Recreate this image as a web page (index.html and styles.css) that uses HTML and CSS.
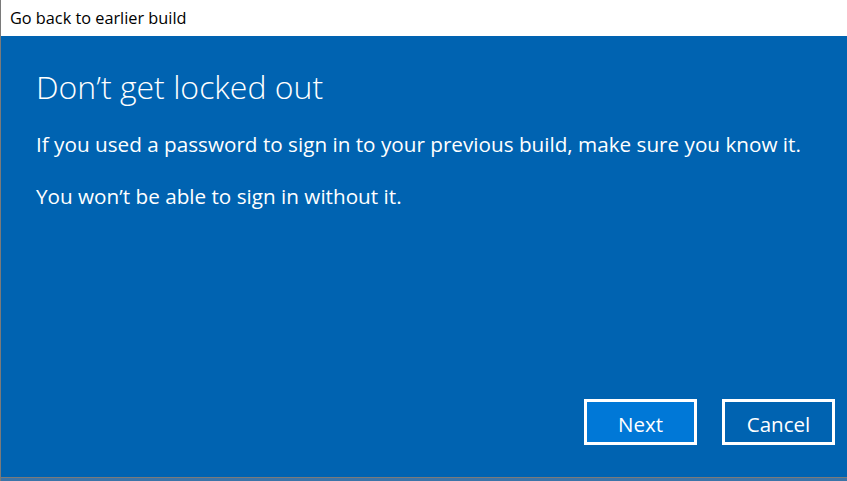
FILE: index.html
```html
<!DOCTYPE html>
<html lang="en">
<head>
    <meta charset="UTF-8">
    <meta name="viewport" content="width=device-width, initial-scale=1.0">
    <title>Go back to earlier build</title>
    <link rel="stylesheet" href="styles.css">
</head>
<body>
    <div class="window">
        <div class="titlebar">Go back to earlier build</div>
        <div class="content">
            <h1>Don’t get locked out</h1>
            <p>If you used a password to sign in to your previous build, make sure you know it.</p>
            <p>You won’t be able to sign in without it.</p>
            <div class="buttons">
                <button class="btn primary">Next</button>
                <button class="btn">Cancel</button>
            </div>
        </div>
        <div class="bottom-edge"></div>
    </div>
</body>
</html>
```

FILE: styles.css
```css
html, body {
    margin: 0;
    padding: 0;
}
body {
    font-family: "Open Sans", "Noto Sans", sans-serif;
    background-color: #0063b1;
    width: 847px;
    height: 481px;
    overflow: hidden;
}
.window {
    height: 481px;
    display: flex;
    flex-direction: column;
    border-left: 1px solid #7a7a7a;
    box-sizing: border-box;
}
.titlebar {
    height: 36px;
    background-color: #fff;
    color: #000;
    font-size: 16.3px;
    line-height: 36px;
    padding-left: 9px;
}
.content {
    flex: 1;
    display: flex;
    flex-direction: column;
    padding: 0 0 0 35px;
    color: #fff;
}
.content h1 {
    font-weight: 300;
    font-size: 32px;
    margin: 32px 0 23px 0;
    line-height: 38px;
}
.content p {
    font-size: 20.7px;
    margin: 0 0 22px 0;
    line-height: 30px;
}
.buttons {
    margin-top: auto;
    display: flex;
    justify-content: flex-end;
    gap: 25px;
    padding: 0 12px 32px 0;
}
.btn {
    width: 113px;
    height: 46px;
    border: 3px solid #fff;
    background-color: #0063b1;
    color: #fff;
    font-family: "Open Sans", "Noto Sans", sans-serif;
    font-size: 20.5px;
    box-sizing: border-box;
    padding: 4px 0 0 0;
}
.btn.primary {
    background-color: #0078d7;
}
.bottom-edge {
    height: 4px;
    border-top: 1px solid #7a7a7a;
    background-color: #3b74a8;
    box-sizing: border-box;
}
```
